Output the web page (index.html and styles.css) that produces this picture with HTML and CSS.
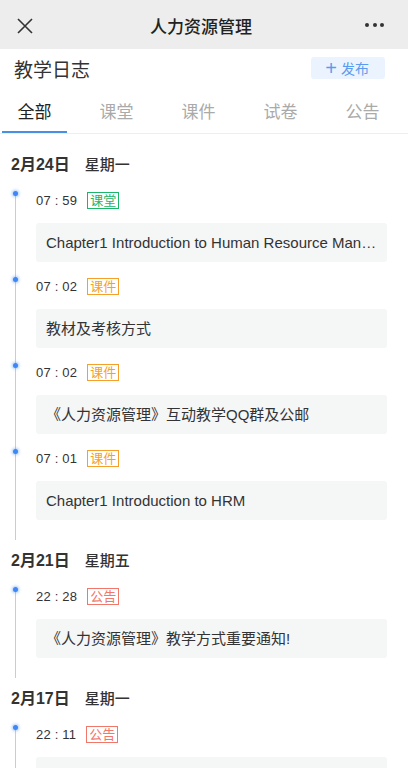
FILE: index.html
```html
<!doctype html>
<html>
<head>
<title>教学日志</title>
<meta charset="utf-8" />
<meta name="viewport" content="width=device-width, initial-scale=1" />
<link rel="stylesheet" href="styles.css">
</head>

<body>
<div class="topbar">
	<svg class="icon-close" width="16" height="16" viewBox="0 0 16 16">
		<path d="M1 1 L15 15 M15 1 L1 15" stroke="#333" stroke-width="1.6" fill="none" />
	</svg>
	<h1 class="topbar-title">人力资源管理</h1>
	<div class="icon-more"><i></i><i></i><i></i></div>
</div>

<div class="page-head">
	<h2>教学日志</h2>
	<a class="btn-publish"><span class="plus">+</span>发布</a>
</div>

<ul class="tabs">
	<li class="active">全部</li>
	<li>课堂</li>
	<li>课件</li>
	<li>试卷</li>
	<li>公告</li>
</ul>

<div class="log">
	<div class="day">
		<div class="day-title"><strong>2月24日</strong><span>星期一</span></div>
		<ul class="timeline">
			<li>
				<div class="meta"><span class="time">07 : 59</span><em class="tag tag-class">课堂</em></div>
				<div class="card">Chapter1 Introduction to Human Resource Management</div>
			</li>
			<li>
				<div class="meta"><span class="time">07 : 02</span><em class="tag tag-ware">课件</em></div>
				<div class="card">教材及考核方式</div>
			</li>
			<li>
				<div class="meta"><span class="time">07 : 02</span><em class="tag tag-ware">课件</em></div>
				<div class="card">《人力资源管理》互动教学QQ群及公邮</div>
			</li>
			<li>
				<div class="meta"><span class="time">07 : 01</span><em class="tag tag-ware">课件</em></div>
				<div class="card">Chapter1 Introduction to HRM</div>
			</li>
		</ul>
	</div>

	<div class="day">
		<div class="day-title"><strong>2月21日</strong><span>星期五</span></div>
		<ul class="timeline">
			<li>
				<div class="meta"><span class="time">22 : 28</span><em class="tag tag-notice">公告</em></div>
				<div class="card">《人力资源管理》教学方式重要通知!</div>
			</li>
		</ul>
	</div>

	<div class="day">
		<div class="day-title"><strong>2月17日</strong><span>星期一</span></div>
		<ul class="timeline">
			<li>
				<div class="meta"><span class="time">22 : 11</span><em class="tag tag-notice">公告</em></div>
				<div class="card">《人力资源管理》课程重要通知!</div>
			</li>
		</ul>
	</div>
</div>

</body>
</html>
```

FILE: styles.css
```css
* { box-sizing: border-box; }
body { margin: 0; background: #fff; color: #333; font-family: "Liberation Sans", "Noto Sans CJK SC", sans-serif; overflow: hidden; }
ul { margin: 0; padding: 0; list-style: none; }
h1, h2 { margin: 0; font-weight: normal; }

.topbar { height: 49px; background: #ededed; display: flex; align-items: center; justify-content: space-between; padding: 0 24px 0 17px; }
.icon-close { display: block; margin-top: 3px; }
.topbar-title { font-size: 17px; font-weight: 500; color: #222; margin-left: 4px; margin-top: 2px; }
.icon-more { display: flex; gap: 3.5px; margin-top: 1px; }
.icon-more i { width: 4px; height: 4px; border-radius: 50%; background: #333; }

.page-head { display: flex; align-items: center; justify-content: space-between; padding: 0 23px 0 14px; height: 38px; }
.page-head h2 { font-size: 19px; color: #333; }
.btn-publish { display: flex; align-items: center; height: 22px; padding: 0 16px 0 14px; background: #ebf4fe; border-radius: 3px; color: #5a9bef; font-size: 14px; }
.btn-publish .plus { font-size: 20px; font-weight: 300; margin-right: 4px; line-height: 22px; }

.tabs { display: flex; justify-content: space-between; padding: 0 13px 0 2px; margin-top: 13px; border-bottom: 1px solid #eee; }
.tabs li { width: 65px; text-align: center; font-size: 17px; color: #aaa; height: 33px; line-height: 26px; }
.tabs li.active { color: #222; border-bottom: 2px solid #4a90e2; }

.log { padding-top: 10px; }
.day-title { padding: 10px 0 0 11px; height: 32px; font-size: 15px; line-height: 22px; color: #333; }
.day-title strong { font-size: 16px; }
.day-title span { margin-left: 15px; font-weight: 500; color: #333; }

.timeline { position: relative; padding-bottom: 20px; }
.timeline::before { content: ""; position: absolute; left: 15px; top: 16px; bottom: 0; width: 1px; background: #b4d0f6; }
.timeline li { position: relative; padding: 15px 21px 0 36px; }
.timeline li::before { content: ""; position: absolute; left: 13px; top: 15px; width: 5px; height: 5px; border-radius: 50%; background: #3f87f5; box-shadow: 0 0 3px 1px rgba(63,135,245,0.45); }

.meta { display: flex; align-items: center; height: 18px; }
.time { font-size: 13px; color: #333; letter-spacing: 0.2px; }
.tag { font-style: normal; font-size: 13px; line-height: 15px; padding: 0 2px; border: 1px solid; margin-left: 10px; }
.tag-class { color: #1cb56a; border-color: #1cb56a; }
.tag-ware { color: #f5a02a; border-color: #f5a02a; }
.tag-notice { color: #f2776b; border-color: #f2776b; }

.card { margin-top: 14px; height: 39px; line-height: 39px; padding: 0 4px 0 10px; background: #f5f6f6; border-radius: 3px; font-size: 15px; color: #333; white-space: nowrap; overflow: hidden; text-overflow: ellipsis; }
```
